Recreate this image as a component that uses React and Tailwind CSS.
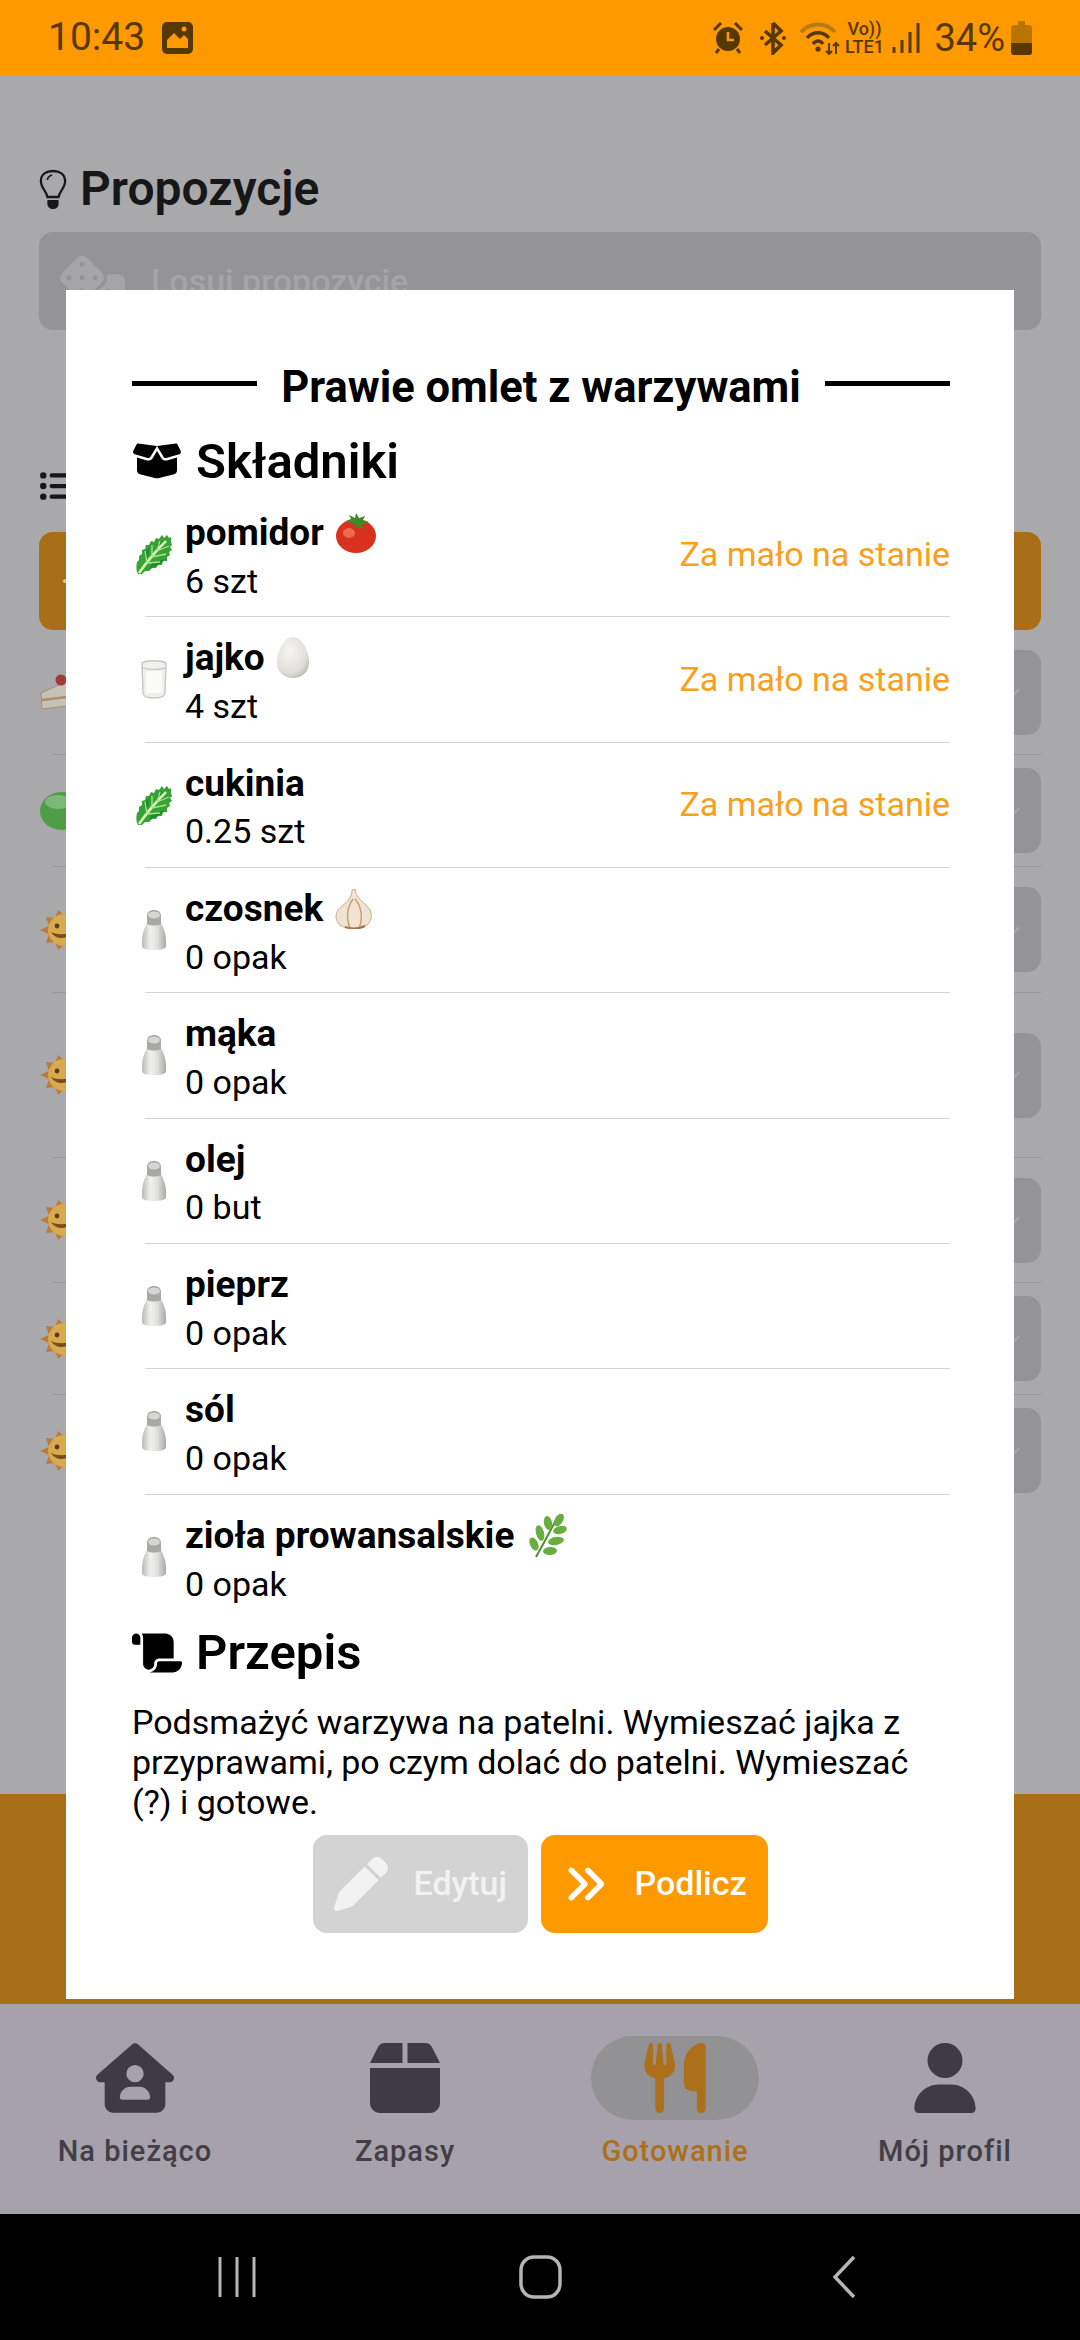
import React from 'react';
import {
  FaAnglesRight, FaBox, FaBoxOpen, FaChevronDown, FaDice, FaHouseUser, FaListUl,
  FaPen, FaPlus, FaScroll, FaUser, FaUtensils,
} from 'react-icons/fa6';

// emoji drawn by hand, there is no colour emoji font in the sandbox
const Lettuce = () => (
  <svg width="36" height="42" viewBox="0 0 36 42" className="shrink-0">
    <path d="M2 41 C0 38 0 33 1 29 L3 27 L3 23 L6 21 L6 17 L9 16 L10 12 L13 12 L15 8 L18 9 L20 5 L23 6 L26 2 L28 5 L31 2 L33 5 L35 4 L35 9 L36 12 L34 14 L36 17 L33 19 L34 22 L31 24 L31 28 L27 28 L26 32 L22 32 L20 35 L16 35 L13 38 L9 38 L6 41 Z" fill="#37a336" />
    <path d="M16 30 L30 26 L24 31 L13 36 Z M8 22 L14 12 L12 24 Z M20 12 L30 6 L26 16 Z" fill="#1f8a2e" />
    <path d="M3 40 C10 30 18 20 30 8" stroke="#d8f5b8" strokeWidth="2.6" fill="none" />
    <path d="M11 30 L9 18 M16 24 L16 12 M21 18 L24 8 M11 30 L24 29 M16 24 L30 21 M21 18 L33 13" stroke="#a8e38a" strokeWidth="1.3" fill="none" />
  </svg>
);
const Glass = () => (
  <svg width="26" height="40" viewBox="0 0 26 40" className="shrink-0">
    <path d="M1 4 C6 1 20 1 25 4 L24 34 C24 38 20 39 13 39 C6 39 2 38 2 34 Z" fill="#f0f0ee" stroke="#c6c6c3" strokeWidth="1.4" />
    <path d="M2 9 C8 11 18 11 24 9" stroke="#cdcdca" strokeWidth="1.4" fill="none" />
    <rect x="5" y="12" width="16" height="22" rx="2" fill="#fbfbfa" />
  </svg>
);
const Shaker = () => (
  <svg width="24" height="40" viewBox="0 0 24 40" className="shrink-0">
    <defs>
      <linearGradient id="shk" x1="0" x2="1" y1="0" y2="0">
        <stop offset="0" stopColor="#b9b9b7" />
        <stop offset="0.35" stopColor="#f1f1ef" />
        <stop offset="0.65" stopColor="#dededc" />
        <stop offset="1" stopColor="#a9a9a7" />
      </linearGradient>
    </defs>
    <path d="M5 13 L19 13 C22 19 24 24 24 31 L24 36 C24 39 19 40 12 40 C5 40 0 39 0 36 L0 31 C0 24 2 19 5 13 Z" fill="url(#shk)" />
    <path d="M5 14 L5 6 C5 2 8 0 12 0 C16 0 19 2 19 6 L19 14 C15 16 9 16 5 14 Z" fill="#a8a8a6" />
    <ellipse cx="12" cy="5" rx="6" ry="3.5" fill="#d5d5d3" />
  </svg>
);
const Tomato = () => (
  <svg width="40" height="40" viewBox="0 0 40 40" className="shrink-0">
    <ellipse cx="20" cy="23" rx="20" ry="17" fill="#d8321f" />
    <ellipse cx="13" cy="20" rx="6" ry="5" fill="#ee6a4a" />
    <path d="M20 12 L10 8 L15 6 L13 2 L19 5 L20 0 L23 5 L29 3 L27 7 L33 9 L26 11 L27 16 L21 13 L15 16 Z" fill="#3f8a26" />
  </svg>
);
const Egg = () => (
  <svg width="32" height="41" viewBox="0 0 32 41" className="shrink-0">
    <defs>
      <radialGradient id="egg" cx="0.4" cy="0.35" r="0.75">
        <stop offset="0" stopColor="#f6f5f2" />
        <stop offset="0.7" stopColor="#e0dfda" />
        <stop offset="1" stopColor="#b4b3ad" />
      </radialGradient>
    </defs>
    <path d="M16 0 C25 0 32 14 32 25 C32 35 25 41 16 41 C7 41 0 35 0 25 C0 14 7 0 16 0 Z" fill="url(#egg)" />
  </svg>
);
const Garlic = () => (
  <svg width="38" height="40" viewBox="0 0 38 40" className="shrink-0">
    <path d="M20 0 C21 7 25 11 31 16 C38 22 38 31 32 36 C26 40 11 41 5 36 C-1 31 0 22 7 17 C13 12 17 8 17 1 Z" fill="#f0e3d2" stroke="#cfae8d" strokeWidth="1" />
    <path d="M18 10 C12 18 11 30 15 39 M20 10 C27 18 28 30 24 39" stroke="#c99a72" strokeWidth="1.4" fill="none" />
    <path d="M10 38 C16 40 24 40 30 37" stroke="#a9744a" strokeWidth="2" fill="none" />
  </svg>
);
const Herb = () => (
  <svg width="42" height="44" viewBox="0 0 38 44" className="shrink-0">
    <path d="M8 43 C14 32 22 18 30 2" stroke="#4d8f2e" strokeWidth="2" fill="none" />
    <g fill="#69ad3f">
      <ellipse cx="31" cy="6" rx="4" ry="7" transform="rotate(30 31 6)" />
      <ellipse cx="20" cy="9" rx="4" ry="7" transform="rotate(-10 20 9)" />
      <ellipse cx="32" cy="16" rx="7" ry="4" transform="rotate(-15 32 16)" />
      <ellipse cx="12" cy="19" rx="4" ry="8" transform="rotate(-15 12 19)" />
      <ellipse cx="28" cy="27" rx="8" ry="4" transform="rotate(-10 28 27)" />
      <ellipse cx="6" cy="30" rx="4" ry="7" transform="rotate(-25 6 30)" />
      <ellipse cx="22" cy="37" rx="7" ry="4" transform="rotate(-5 22 37)" />
    </g>
  </svg>
);

// dimmed emoji behind the dialog, only their left part shows
const Cake = () => (
  <svg width="44" height="36" viewBox="0 0 44 36" className="shrink-0">
    <path d="M1 19 L32 5 L44 12 L44 30 L2 35 Z" fill="#c9c1b4" stroke="#a08f78" strokeWidth="1" />
    <path d="M2 26 L44 21" stroke="#a98f6e" strokeWidth="2.5" />
    <circle cx="21" cy="6" r="5.5" fill="#a33a3a" />
  </svg>
);
const GreenBall = () => (
  <svg width="44" height="40" viewBox="0 0 44 40" className="shrink-0">
    <ellipse cx="22" cy="20" rx="22" ry="19" fill="#4f9e47" />
    <ellipse cx="18" cy="11" rx="13" ry="7" fill="#7cb876" />
  </svg>
);
const Sun = () => (
  <svg width="48" height="40" viewBox="0 0 48 40" className="shrink-0">
    <path d="M0 20 L9 16 L6 7 L15 8 L18 0 L24 5 L30 0 L33 8 L42 7 L39 16 L48 20 L39 24 L42 33 L33 32 L30 40 L24 35 L18 40 L15 32 L6 33 L9 24 Z" fill="#bb7c3a" />
    <circle cx="24" cy="20" r="16" fill="#d9a94e" />
    <circle cx="17" cy="16" r="2.4" fill="#5b3f1c" />
    <path d="M11 22 C16 30 26 30 33 22 C26 25 17 25 11 22 Z" fill="#7a4c1e" />
  </svg>
);

const Bulb = () => (
  <svg width="28" height="40" viewBox="0 0 30 40" preserveAspectRatio="none" className="shrink-0">
    <path d="M9 28 C8 22 2 19 2 12 C2 5 8 2 15 2 C22 2 28 5 28 12 C28 19 22 22 21 28 Z" fill="none" stroke="#17171a" strokeWidth="2.4" />
    <path d="M9 11 C9 8 11 7 14 6" fill="none" stroke="#17171a" strokeWidth="1.8" />
    <path d="M9 31 H21 V35 C21 38 18 40 15 40 C12 40 9 38 9 35 Z" fill="#17171a" />
  </svg>
);

const bgRows = [
  { h: 'h-[124px]', icon: <Cake /> },
  { h: 'h-[112px]', icon: <GreenBall /> },
  { h: 'h-[126px]', icon: <Sun /> },
  { h: 'h-[165px]', icon: <Sun /> },
  { h: 'h-[125px]', icon: <Sun /> },
  { h: 'h-[112px]', icon: <Sun /> },
  { h: 'h-[112px]', icon: <Sun /> },
];

const ingredients = [
  { name: 'pomidor', emoji: <Tomato />, qty: '6 szt', icon: <Lettuce />, low: true },
  { name: 'jajko', emoji: <Egg />, qty: '4 szt', icon: <Glass />, low: true },
  { name: 'cukinia', qty: '0.25 szt', icon: <Lettuce />, low: true },
  { name: 'czosnek', emoji: <Garlic />, qty: '0 opak', icon: <Shaker /> },
  { name: 'mąka', qty: '0 opak', icon: <Shaker /> },
  { name: 'olej', qty: '0 but', icon: <Shaker /> },
  { name: 'pieprz', qty: '0 opak', icon: <Shaker /> },
  { name: 'sól', qty: '0 opak', icon: <Shaker /> },
  { name: 'zioła prowansalskie', emoji: <Herb />, qty: '0 opak', icon: <Shaker /> },
];

const tabs = [
  { label: 'Na bieżąco', icon: <FaHouseUser size={78} /> },
  { label: 'Zapasy', icon: <FaBox className="w-[70px] h-[80px]" preserveAspectRatio="none" /> },
  { label: 'Gotowanie', icon: <FaUtensils size={70} />, active: true },
  { label: 'Mój profil', icon: <FaUser size={70} /> },
];

const StatusBar = () => (
  <div className="h-[75px] shrink-0 bg-[#ff9900] text-[#573800] flex items-center pl-[48px] pr-[48px]">
    <span className="text-[39px] leading-none">10:43</span>
    <svg width="31" height="32" viewBox="0 0 31 32" className="ml-[17px]">
      <rect width="31" height="32" rx="5" fill="#573800" />
      <path d="M5 26 V18 L12 11 L18 17 L22 13 L26 17 V26 Z" fill="#ff9900" />
      <circle cx="22" cy="7" r="2.5" fill="#ff9900" />
    </svg>
    <div className="ml-auto flex items-center">
      <svg width="30" height="32" viewBox="0 0 30 32">
        <circle cx="15" cy="17" r="12" fill="#573800" />
        <path d="M15 10 V18 H21" stroke="#ff9900" strokeWidth="2.6" fill="none" />
        <path d="M1 8 L8 1 M29 8 L22 1 M6 27 L3 31 M24 27 L27 31" stroke="#573800" strokeWidth="3" />
      </svg>
      <svg width="28" height="34" viewBox="0 0 28 34" className="ml-[16px]">
        <path d="M14 2 V32 L22 24 L6 10 M14 2 L22 10 L6 24" stroke="#573800" strokeWidth="3.6" fill="none" />
        <circle cx="3" cy="17" r="2" fill="#573800" />
        <circle cx="25" cy="17" r="2" fill="#573800" />
      </svg>
      <svg width="42" height="34" viewBox="0 0 42 34" className="ml-[12px]">
        <path d="M2 11 C11 1 27 1 36 11" stroke="#b97a10" strokeWidth="4" fill="none" />
        <path d="M8 17 C14 10 24 10 30 17 M14 23 C17 19 21 19 24 23" stroke="#573800" strokeWidth="3.4" fill="none" />
        <circle cx="19" cy="28" r="2.6" fill="#573800" />
        <path d="M30 22 L30 33 M27 30 L30 33 L33 30 M37 33 L37 22 M34 25 L37 22 L40 25" stroke="#573800" strokeWidth="2" fill="none" />
      </svg>
      <div className="ml-[3px] flex flex-col items-center text-[18px] leading-[18px] font-medium w-[40px]">
        <span>Vo))</span>
        <span>LTE1</span>
      </div>
      <svg width="28" height="30" viewBox="0 0 28 30" className="ml-[8px]">
        <path d="M2 24 V30 M10 17 V30 M18 9 V30 M26 0 V30" stroke="#573800" strokeWidth="3" />
      </svg>
      <span className="ml-[14px] text-[38px] leading-none">34%</span>
      <svg width="21" height="34" viewBox="0 0 21 34" className="ml-[6px]">
        <path d="M7 0 H14 V4 H18 C20 4 21 5 21 7 V31 C21 33 20 34 18 34 H3 C1 34 0 33 0 31 V7 C0 5 1 4 3 4 H7 Z" fill="#bb7400" />
        <path d="M0 22 H21 V31 C21 33 20 34 18 34 H3 C1 34 0 33 0 31 Z" fill="#573800" />
      </svg>
    </div>
  </div>
);

const Background = () => (
  <div className="flex-1 bg-[#a9a9ab] flex flex-col overflow-hidden">
    <div className="px-[39px] pt-[86px]">
      <div className="flex items-center h-[56px] text-[#17171a]">
        <Bulb />
        <span className="ml-[13px] text-[48px] font-semibold leading-none">Propozycje</span>
      </div>
      <div className="mt-[15px] h-[98px] rounded-[14px] bg-[#949496] flex items-center pl-[20px] text-[#a5a5a7]">
        <FaDice size={66} />
        <span className="ml-[26px] text-[34px] font-medium">Losuj propozycje</span>
      </div>
      <div className="mt-[141px] h-[30px] text-[#17171a] flex items-center">
        <FaListUl size={34} />
      </div>
      <div className="mt-[31px] h-[98px] rounded-[14px] bg-[#a96f18] flex items-center pl-[21px] text-[#cfc6b8]">
        <FaPlus size={30} />
      </div>
      {bgRows.map((row, i) => (
        <div key={i} className={`${row.h} flex items-center justify-between ml-[13px] ${i > 0 ? 'border-t border-[#98989a]' : ''}`}>
          <div className="-ml-[12px]">{row.icon}</div>
          <div className="w-[84px] h-[85px] rounded-[14px] bg-[#949496] flex items-center justify-end pr-[20px] text-[#a5a5a7]">
            <FaChevronDown size={18} />
          </div>
        </div>
      ))}
    </div>
    <div className="mt-auto h-[210px] shrink-0 bg-[#a96f18]" />
  </div>
);

const BottomNav = () => (
  <div className="h-[210px] shrink-0 bg-[#a6a1ab] grid grid-cols-4 pt-[32px]">
    {tabs.map(({ label, icon, active }) => (
      <div key={label} className="flex flex-col items-center">
        <div className={`w-[168px] h-[84px] rounded-full flex items-center justify-center ${active ? 'bg-[#929294] text-[#ac6f1a]' : 'text-[#3e3b46]'}`}>
          {icon}
        </div>
        <span className={`mt-[13px] text-[29px] leading-[36px] font-medium tracking-[1px] ${active ? 'text-[#ac6f1a]' : 'text-[#423e46]'}`}>{label}</span>
      </div>
    ))}
  </div>
);

const SystemNav = () => (
  <div className="h-[126px] shrink-0 bg-black grid grid-cols-3 items-center">
    <svg width="40" height="42" viewBox="0 0 40 42" className="justify-self-start ml-[217px]">
      <path d="M3 1 V41 M20 1 V41 M37 1 V41" stroke="#b5b5b5" strokeWidth="3" />
    </svg>
    <svg width="43" height="44" viewBox="0 0 43 44" className="justify-self-center">
      <rect x="2" y="2" width="39" height="40" rx="13" stroke="#b5b5b5" strokeWidth="3.5" fill="none" />
    </svg>
    <svg width="24" height="44" viewBox="0 0 24 44" className="justify-self-start ml-[112px]">
      <path d="M22 2 L3 22 L22 42" stroke="#b5b5b5" strokeWidth="3.5" fill="none" />
    </svg>
  </div>
);

const SectionTitle = ({ icon, children }) => (
  <div className="flex items-center h-[56px] text-black">
    {icon}
    <span className="ml-[14px] text-[49px] font-semibold leading-none">{children}</span>
  </div>
);

const IngredientRow = ({ item, last }) => (
  <div className={`ml-[13px] h-[125.33px] ${last ? '' : 'border-b border-[#d4d4d4]'}`}>
    <div className="-ml-[13px] h-full flex items-center">
      <div className="w-[53px] flex justify-center pr-[10px]">{item.icon}</div>
      <div className="flex flex-col pt-[5px]">
        <div className="h-[48px] flex items-center gap-[12px]">
          <span className="text-[37px] font-bold">{item.name}</span>
          {item.emoji}
        </div>
        <span className="h-[48px] text-[34px] leading-[48px]">{item.qty}</span>
      </div>
      {item.low && <span className="ml-auto text-[34px] text-[#f99f1b]">Za mało na stanie</span>}
    </div>
  </div>
);

const RecipeDialog = () => (
  <div className="absolute left-[66px] top-[290px] w-[948px] h-[1709px] bg-white text-black pl-[66px] pr-[64px] pt-[74px]">
    <div className="flex items-center justify-between h-[48px]">
      <div className="w-[125px] h-[5px] bg-black -translate-y-[5px]" />
      <span className="text-[43.5px] font-bold leading-none">Prawie omlet z warzywami</span>
      <div className="w-[125px] h-[5px] bg-black -translate-y-[5px]" />
    </div>
    <div className="mt-[21px] mb-[3px]">
      <SectionTitle icon={<FaBoxOpen size={50} />}>Składniki</SectionTitle>
    </div>
    {ingredients.map((item, i) => (
      <IngredientRow key={item.name} item={item} last={i === ingredients.length - 1} />
    ))}
    <div className="mt-[5px]">
      <SectionTitle icon={<FaScroll size={50} />}>Przepis</SectionTitle>
    </div>
    <p className="mt-[21px] text-[34px] leading-[40px] pr-[30px]">
      Podsmażyć warzywa na patelni. Wymieszać jajka z przyprawami, po czym dolać do patelni. Wymieszać (?) i gotowe.
    </p>
    <div className="mt-[13px] flex justify-center gap-[13px] pr-[2px]">
      <button className="w-[215px] h-[98px] rounded-[14px] bg-[#d3d3d3] text-[#f2f2f2] flex items-center pl-[21px]">
        <FaPen size={54} />
        <span className="ml-[26px] text-[34px] font-medium">Edytuj</span>
      </button>
      <button className="w-[227px] h-[98px] rounded-[14px] bg-[#ff9900] text-white flex items-center pl-[22px]">
        <FaAnglesRight size={44} />
        <span className="ml-[28px] text-[34px] font-medium">Podlicz</span>
      </button>
    </div>
  </div>
);

export default function App() {
  return (
    <div className="relative w-[1080px] h-[2340px] overflow-hidden flex flex-col font-['Roboto',sans-serif]">
      <StatusBar />
      <Background />
      <BottomNav />
      <SystemNav />
      <RecipeDialog />
    </div>
  );
}
